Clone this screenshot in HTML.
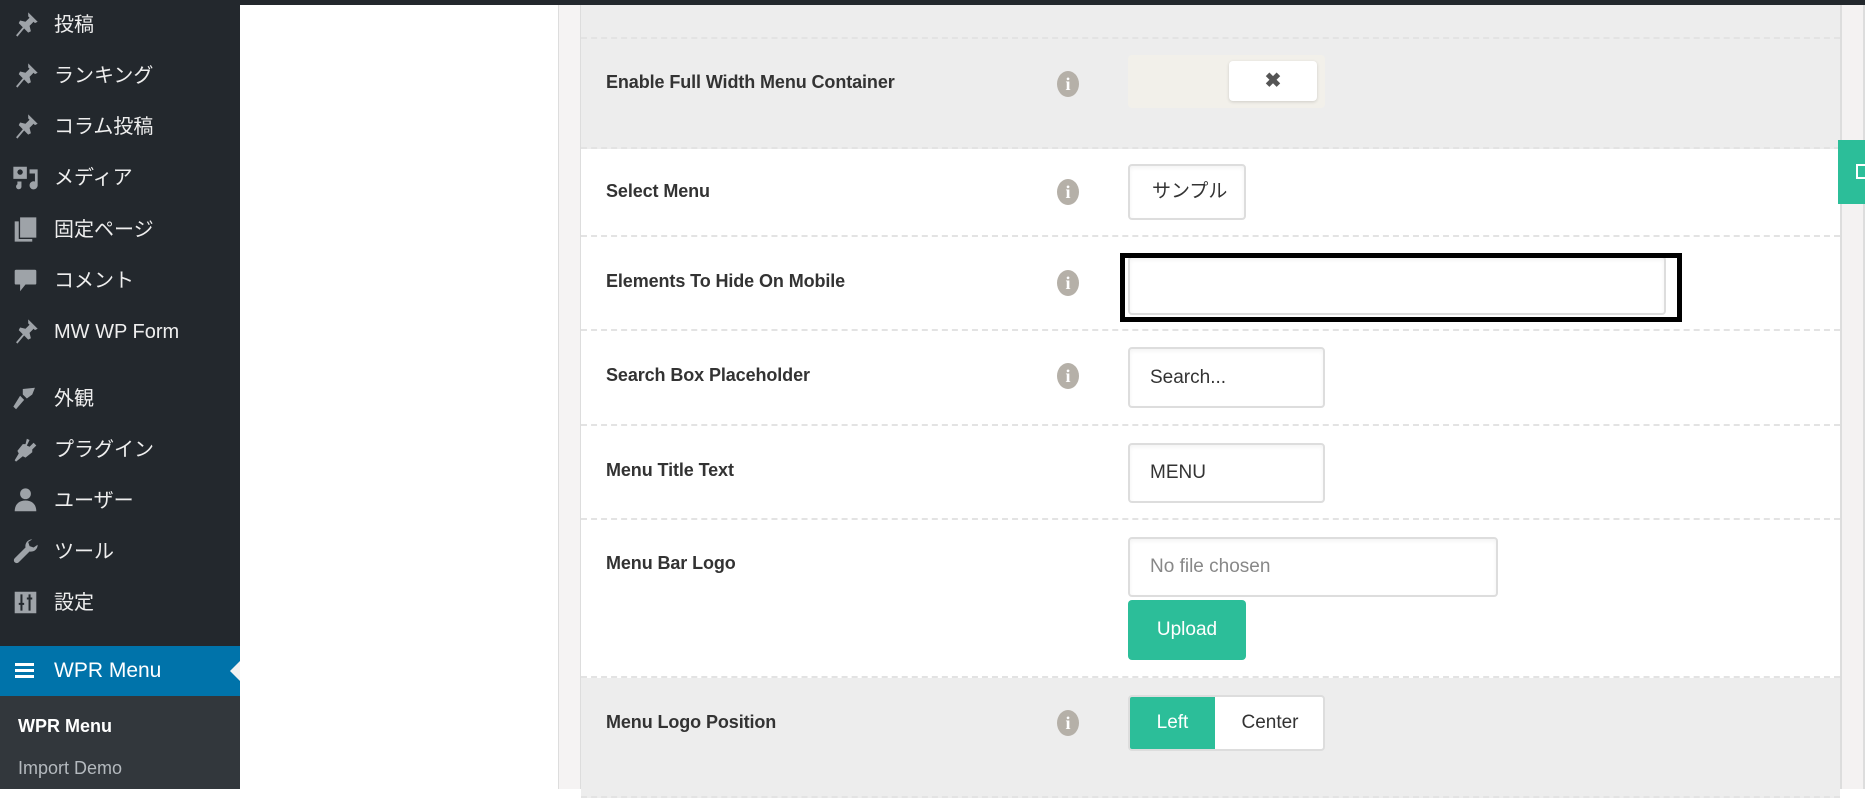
<!DOCTYPE html>
<html><head><meta charset="utf-8"><style>
*{margin:0;padding:0;box-sizing:border-box}
body{width:1865px;height:789px;overflow:hidden;background:#fff;font-family:"Liberation Sans","Noto Sans CJK JP",sans-serif;position:relative}
.topbar{position:absolute;left:0;top:0;width:1865px;height:5px;background:#23282d;z-index:5}
.side{position:absolute;left:0;top:0;width:240px;height:789px;background:#23282d}
.mi{position:absolute;left:0;width:240px;height:40px;color:#eee;font-size:20px;line-height:40px;padding-left:54px}
.mi svg{position:absolute;left:12px;top:6px;width:27px;height:27px;fill:#9ea3a8}
.active{position:absolute;left:0;top:646px;width:240px;height:50px;background:#0073aa;color:#fff;font-size:21px;line-height:50px;padding-left:54px}
.active:after{content:"";position:absolute;right:0;top:15px;border:10px solid transparent;border-right-color:#f1f1f1}
.sub{position:absolute;left:0;top:696px;width:240px;height:93px;background:#32373c}
.strip{position:absolute;left:558px;top:0;width:23px;height:789px;background:#f5f3f3;border-left:1px solid #ddd;border-right:1px solid #ddd}
.panel{position:absolute;left:581px;top:0;width:1259px;height:789px;background:#fff}
.rstrip{position:absolute;left:1840px;top:0;width:25px;height:789px;background:#f4f2f2;border-left:2px solid #ddd;border-right:2px solid #ddd}
.row{position:absolute;left:0;width:1259px;border-bottom:2px dashed #e3e3e3}
.g{background:#ededed}
.lbl{position:absolute;left:25px;font-size:18px;font-weight:bold;color:#333;letter-spacing:-0.1px}
.info{position:absolute;left:476px;width:22px;height:26px;border-radius:50%;background:#b5b0a8;color:#fff;font:bold 18px/26px "Liberation Serif",serif;text-align:center;margin-top:-2px}
.inp{position:absolute;left:547px;background:#fff;border:2px solid #ddd;border-radius:4px;box-shadow:inset 0 2px 4px rgba(0,0,0,.05);font-size:19px;color:#333;padding-left:20px}
</style></head><body>
<div class="topbar"></div>
<div class="side">
<div class="mi" style="top:5px"><svg viewBox="0 0 20 20"><path d="M12 1l7 7-2 1-1-1-3 3 1 4-2 1-3-3-5 6-1-1 5-6-3-3 1-2 4 1 3-3-1-1z"/></svg>投稿</div>
<div class="mi" style="top:56px"><svg viewBox="0 0 20 20"><path d="M12 1l7 7-2 1-1-1-3 3 1 4-2 1-3-3-5 6-1-1 5-6-3-3 1-2 4 1 3-3-1-1z"/></svg>ランキング</div>
<div class="mi" style="top:107px"><svg viewBox="0 0 20 20"><path d="M12 1l7 7-2 1-1-1-3 3 1 4-2 1-3-3-5 6-1-1 5-6-3-3 1-2 4 1 3-3-1-1z"/></svg>コラム投稿</div>
<div class="mi" style="top:158px"><svg viewBox="0 0 20 20"><path d="M1 2h10v9H1zM13 4h6v12a3 3 0 1 1-2-3V7h-4zM4 13h3v4a2 2 0 1 1-3-2z"/><circle cx="6" cy="6" r="2" fill="#23282d"/></svg>メディア</div>
<div class="mi" style="top:210px"><svg viewBox="0 0 20 20"><path d="M6 1h12v15H6zM2 4h3v13h10v2H2z"/></svg>固定ページ</div>
<div class="mi" style="top:261px"><svg viewBox="0 0 20 20"><path d="M3 2h14a1 1 0 0 1 1 1v9a1 1 0 0 1-1 1H10l-4 5v-5H3a1 1 0 0 1-1-1V3a1 1 0 0 1 1-1z"/></svg>コメント</div>
<div class="mi" style="top:312px"><svg viewBox="0 0 20 20"><path d="M12 1l7 7-2 1-1-1-3 3 1 4-2 1-3-3-5 6-1-1 5-6-3-3 1-2 4 1 3-3-1-1z"/></svg>MW WP Form</div>
<div class="mi" style="top:379px"><svg viewBox="0 0 20 20"><path d="M8 3l9-1-2 5-4 3-3-3zM6 8l3 3-6 7-2-2z"/></svg>外観</div>
<div class="mi" style="top:430px"><svg viewBox="0 0 20 20"><path d="M11 2l2 1-2 4 2 1 3-3 2 2-3 3v2l-5 4-2-1-5 4-1-1 3-5-1-2 4-5h2z"/></svg>プラグイン</div>
<div class="mi" style="top:481px"><svg viewBox="0 0 20 20"><circle cx="10" cy="5" r="4"/><path d="M2 18c0-5 3-8 8-8s8 3 8 8z"/></svg>ユーザー</div>
<div class="mi" style="top:532px"><svg viewBox="0 0 20 20"><path d="M15 1a5 5 0 0 0-5 6L2 15a2 2 0 0 0 3 3l8-8a5 5 0 0 0 6-5l-3 2-3-1-1-3z"/></svg>ツール</div>
<div class="mi" style="top:583px"><svg viewBox="0 0 20 20"><path d="M2 2h16v16H2z"/><path d="M7 4v12M13 4v12M5 11h4M11 7h4" stroke="#23282d" stroke-width="1.5"/></svg>設定</div>
<div class="active"><svg style="position:absolute;left:15px;top:15px" width="19" height="19" viewBox="0 0 19 19"><path d="M0 2h19v3H0zM0 8h19v3H0zM0 14h19v3H0z" fill="#fff"/></svg>WPR Menu</div>
<div class="sub">
<div style="position:absolute;left:18px;top:20px;color:#fff;font-weight:bold;font-size:18px">WPR Menu</div>
<div style="position:absolute;left:18px;top:62px;color:#b4b9be;font-size:18px">Import Demo</div>
</div>
</div>
<div class="strip"></div>
<div class="panel">
<div class="row g" style="top:0;height:39px"></div>
<div class="row g" style="top:39px;height:110px">
<div class="lbl" style="top:33px">Enable Full Width Menu Container</div>
<div class="info" style="top:34px">i</div>
<div style="position:absolute;left:547px;top:16px;width:197px;height:53px;background:#f2f0ea;border-radius:4px"></div>
<div style="position:absolute;left:648px;top:22px;width:88px;height:40px;background:#fff;border-radius:4px;box-shadow:0 1px 3px rgba(0,0,0,.15);text-align:center;font:bold 20px/40px 'Liberation Sans',sans-serif;color:#555">✖</div>
</div>
<div class="row" style="top:149px;height:88px">
<div class="lbl" style="top:32px">Select Menu</div>
<div class="info" style="top:32px">i</div>
<div class="inp" style="top:15px;width:118px;height:56px;line-height:52px;padding-left:22px;overflow:hidden;white-space:nowrap">サンプル</div>
</div>
<div class="row" style="top:237px;height:94px">
<div class="lbl" style="top:34px">Elements To Hide On Mobile</div>
<div class="info" style="top:35px">i</div>
<div class="inp" style="top:19px;width:538px;height:59px"></div>
<div style="position:absolute;left:539px;top:16px;width:562px;height:69px;border:5px solid #000"></div>
</div>
<div class="row" style="top:331px;height:95px">
<div class="lbl" style="top:34px">Search Box Placeholder</div>
<div class="info" style="top:34px">i</div>
<div class="inp" style="top:16px;width:197px;height:61px;line-height:57px">Search...</div>
</div>
<div class="row" style="top:426px;height:94px">
<div class="lbl" style="top:34px">Menu Title Text</div>
<div class="inp" style="top:17px;width:197px;height:60px;line-height:56px">MENU</div>
</div>
<div class="row" style="top:520px;height:158px">
<div class="lbl" style="top:33px">Menu Bar Logo</div>
<div class="inp" style="top:17px;width:370px;height:60px;line-height:56px;color:#888">No file chosen</div>
<div style="position:absolute;left:547px;top:80px;width:118px;height:60px;background:#2cbe99;border-radius:4px;color:#fff;font-size:19px;line-height:60px;text-align:center">Upload</div>
</div>
<div class="row g" style="top:678px;height:120px">
<div class="lbl" style="top:34px">Menu Logo Position</div>
<div class="info" style="top:34px">i</div>
<div style="position:absolute;left:547px;top:17px;width:197px;height:56px;border:2px solid #ddd;border-radius:4px;background:#fff;overflow:hidden">
<div style="position:absolute;left:0;top:0;width:85px;height:54px;background:#2cbe99;border-bottom:2px solid #1fa080;color:#fff;font-size:19px;line-height:52px;text-align:center">Left</div>
<div style="position:absolute;left:85px;top:0;width:110px;height:54px;color:#333;font-size:19px;line-height:52px;text-align:center">Center</div>
</div>
</div>
</div>
<div class="rstrip"></div>
<div style="position:absolute;left:1838px;top:140px;width:27px;height:64px;background:#2cbe99"><div style="position:absolute;left:18px;top:24px;width:9px;height:15px;border:2px solid #fff;border-right:none"></div></div>
</body></html>
